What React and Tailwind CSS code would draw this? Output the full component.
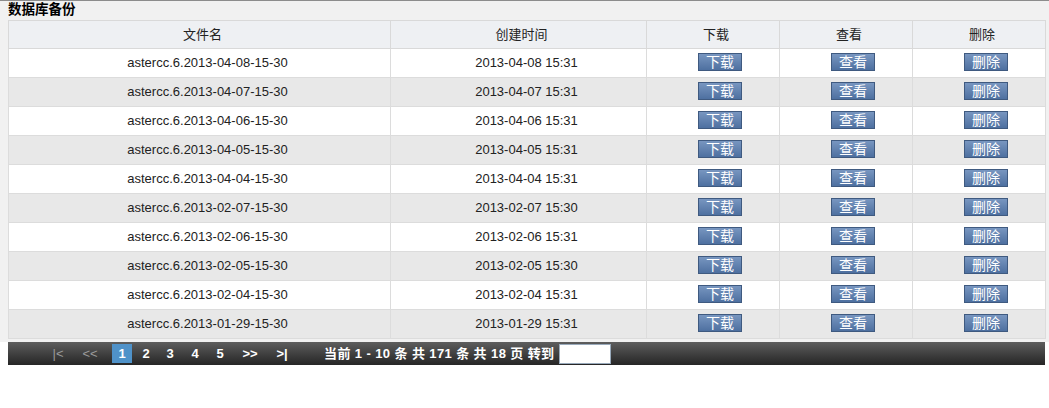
import React from 'react';

const rows = [
  ['astercc.6.2013-04-08-15-30', '2013-04-08 15:31'],
  ['astercc.6.2013-04-07-15-30', '2013-04-07 15:31'],
  ['astercc.6.2013-04-06-15-30', '2013-04-06 15:31'],
  ['astercc.6.2013-04-05-15-30', '2013-04-05 15:31'],
  ['astercc.6.2013-04-04-15-30', '2013-04-04 15:31'],
  ['astercc.6.2013-02-07-15-30', '2013-02-07 15:30'],
  ['astercc.6.2013-02-06-15-30', '2013-02-06 15:31'],
  ['astercc.6.2013-02-05-15-30', '2013-02-05 15:30'],
  ['astercc.6.2013-02-04-15-30', '2013-02-04 15:31'],
  ['astercc.6.2013-01-29-15-30', '2013-01-29 15:31'],
];

const font = { fontFamily: '"Liberation Sans", Arial, "Noto Sans CJK SC", sans-serif' };

const Btn = ({ children }) => (
  <button
    type="button"
    className="inline-flex h-[18px] w-[44px] items-center justify-center border border-[#3f5a80] bg-gradient-to-b from-[#7896c0] to-[#4e70a0] text-[14px] leading-none text-white"
  >
    {children}
  </button>
);

export default function App() {
  return (
    <div className="h-[408px] w-[1049px] bg-white text-[13px] text-[#222]" style={font}>
      <div className="border-t border-[#8c8c8c] bg-[#f1f1f1] pb-[3px]">
        <div className="flex h-[19px] items-center px-2 text-[13.5px] font-bold text-black">数据库备份</div>
        <div className="pl-2 pr-1">
          <table className="w-[1037px] table-fixed border-collapse bg-white">
            <colgroup>
              <col className="w-[382px]" />
              <col className="w-[256px]" />
              <col className="w-[133px]" />
              <col className="w-[133px]" />
              <col className="w-[133px]" />
            </colgroup>
            <thead>
              <tr className="h-[28px] bg-[#eef0f3]">
                {['文件名', '创建时间', '下载', '查看', '删除'].map((h) => (
                  <th key={h} className="border border-[#d9d9d9] pl-[6px] text-center font-normal text-[#222]">
                    {h}
                  </th>
                ))}
              </tr>
            </thead>
            <tbody>
              {rows.map(([name, time], i) => (
                <tr key={name} className={`h-[29px] ${i % 2 ? 'bg-[#e8e8e8]' : 'bg-white'}`}>
                  <td className="border border-[#dcdcdc] pl-[16px] text-center">{name}</td>
                  <td className="border border-[#dcdcdc] pl-[16px] text-center">{time}</td>
                  <td className="border border-[#dcdcdc] pl-[14px] text-center">
                    <Btn>下载</Btn>
                  </td>
                  <td className="border border-[#dcdcdc] pl-[14px] text-center">
                    <Btn>查看</Btn>
                  </td>
                  <td className="border border-[#dcdcdc] pl-[14px] text-center">
                    <Btn>删除</Btn>
                  </td>
                </tr>
              ))}
            </tbody>
          </table>
        </div>
      </div>
      <div className="ml-2 flex h-[23px] w-[1037px] items-center bg-gradient-to-b from-[#5e5e5e] to-[#262626] text-[13px] font-bold text-white">
        <span className="ml-[36px] w-[28px] text-center font-normal text-[#9a9a9a]">|&lt;</span>
        <span className="ml-[4px] w-[28px] text-center font-normal text-[#9a9a9a]">&lt;&lt;</span>
        <span className="ml-[8px] flex h-[19px] w-[20px] items-center justify-center bg-[#4f92c9]">1</span>
        <span className="ml-[4px] w-[20px] text-center">2</span>
        <span className="ml-[4px] w-[20px] text-center">3</span>
        <span className="ml-[5px] w-[20px] text-center">4</span>
        <span className="ml-[5px] w-[20px] text-center">5</span>
        <span className="ml-[6px] w-[28px] text-center">&gt;&gt;</span>
        <span className="ml-[4px] w-[28px] text-center">&gt;|</span>
        <span className="ml-[28px] whitespace-pre tracking-[0.4px]">当前 1 - 10 条 共 171 条 共 18 页 转到 </span>
        <input className="h-[20px] w-[52px] border border-[#9ab] bg-white outline-none" />
      </div>
    </div>
  );
}
